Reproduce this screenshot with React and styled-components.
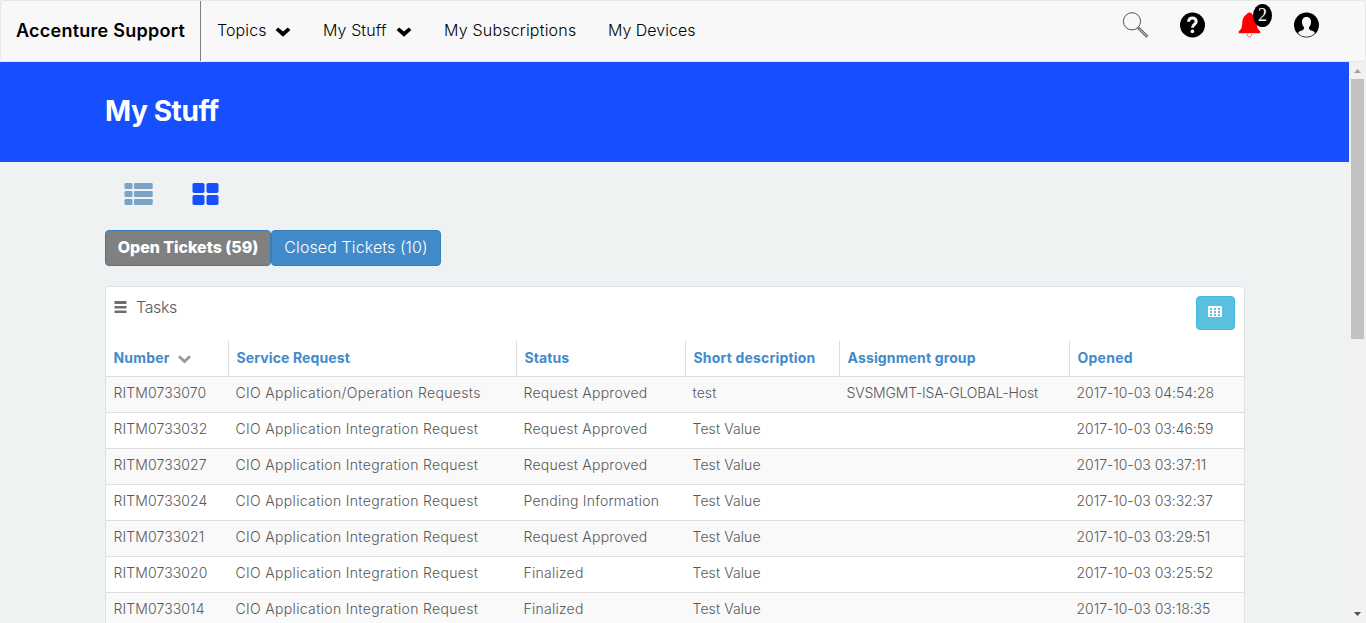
import React from "react";
import styled, { createGlobalStyle } from "styled-components";

const GlobalStyle = createGlobalStyle`
  * { box-sizing: border-box; }
  body { margin: 0; overflow: hidden; background: #eef2f3; font-family: Inter, "Liberation Sans", sans-serif; }
`;

const Page = styled.div`
  height: 623px;
  display: flex;
  flex-direction: column;
  overflow: hidden;
`;

const Navbar = styled.header`
  height: 62px;
  flex: none;
  display: flex;
  align-items: stretch;
  border: 1px solid #e7e7e7;
  border-radius: 4px;
  background: #f8f8f8;
`;

const Brand = styled.div`
  width: 200px;
  padding: 19px 0 0 15px;
  border-right: 1px solid #808080;
  font-size: 18px;
  line-height: 22px;
  font-weight: 600;
  letter-spacing: 0.25px;
  color: #000;
  white-space: nowrap;
`;

const NavItem = styled.a`
  display: flex;
  width: ${(p) => p.$w}px;
  padding: 19px 0 0 16px;
  font-size: 16px;
  line-height: 21px;
  font-weight: 300;
  letter-spacing: ${(p) => p.$ls || 0}px;
  color: #000;
  white-space: nowrap;
`;

const NavCaret = styled.svg`
  width: 16px;
  height: 10px;
  margin: 7px 16px 0 auto;
`;

const NavIcons = styled.div`
  display: flex;
  margin: 10px 45px 0 auto;
  gap: 30px;
`;

const IconSlot = styled.div`
  position: relative;
  width: 27px;
  height: 28px;
  svg { display: block; }
`;

const Badge = styled.span`
  position: absolute;
  left: 17px;
  top: -7px;
  width: 19px;
  height: 23px;
  border-radius: 50%;
  background: #000;
  color: #fff;
  font: 18px/22px "Liberation Serif", serif;
  text-align: center;
`;

const Body = styled.div`
  flex: 1;
  min-height: 0;
  display: flex;
`;

const Content = styled.main`
  flex: 1;
  min-width: 0;
  overflow: hidden;
`;

const Banner = styled.section`
  height: 100px;
  padding: 32px 0 0 105px;
  background: #174fff;
`;

const Title = styled.h1`
  margin: 0;
  font-size: 28px;
  line-height: 34px;
  font-weight: 700;
  letter-spacing: -0.4px;
  color: #fff;
`;

const Container = styled.div`
  width: 1140px;
  margin-left: 105px;
`;

const ViewSwitch = styled.div`
  display: flex;
  gap: 39px;
  height: 68px;
  padding: 21px 0 0 19px;
`;

const Tabs = styled.div`
  display: flex;
  height: 36px;
`;

const Tab = styled.button`
  width: ${(p) => p.$w}px;
  height: 36px;
  padding: 0 0 2px;
  border: 1px solid #357ebd;
  border-radius: 4px;
  background: ${(p) => (p.$active ? "#808080" : "#428bca")};
  color: #fff;
  font: ${(p) => (p.$active ? 800 : 350)} 16px/22px Inter, sans-serif;
  letter-spacing: ${(p) => p.$ls || 0}px;
  white-space: nowrap;
`;

const Card = styled.section`
  margin-top: 20px;
  border: 1px solid #dde4e6;
  border-radius: 4px;
  background: #fff;
`;

const CardHead = styled.div`
  display: flex;
  height: 54px;
  padding: 9px 9px 0 8px;
`;

const CardTitle = styled.h2`
  margin: 0 auto 0 9px;
  font-size: 16px;
  line-height: 23px;
  font-weight: 300;
  letter-spacing: -0.35px;
  color: #585858;
`;

const MenuIcon = styled.svg`
  margin-top: 5px;
`;

const GridButton = styled.button`
  display: flex;
  justify-content: center;
  width: 39px;
  height: 34px;
  padding: 9px 1px 0 0;
  border: 1px solid #46b8da;
  border-radius: 4px;
  background: #5bc0de;
`;

const Row = styled.div`
  display: grid;
  grid-template-columns: 122px 288px 169px 154px 230px 1fr;
  height: 36px;
  border-bottom: 1px solid #ddd;
  background: ${(p) => (p.$striped ? "#f9f9f9" : "#fff")};
`;

const HeadCell = styled.div`
  display: flex;
  padding-left: 7.5px;
  border-left: 1px solid #ddd;
  font-size: 14px;
  line-height: 34px;
  font-weight: 700;
  letter-spacing: ${(p) => p.$ls || 0}px;
  color: #428bca;
  white-space: nowrap;
  &:first-child { border-left: 0; }
`;

const SortIcon = styled.svg`
  margin: 14px 0 0 8.5px;
`;

const Cell = styled.div`
  padding-left: 7.5px;
  font-size: 14px;
  line-height: 32px;
  font-weight: 300;
  letter-spacing: ${(p) => p.$ls || 0}px;
  color: #585858;
  white-space: nowrap;
`;

const Scrollbar = styled.aside`
  width: 17px;
  display: flex;
  flex-direction: column;
  align-items: center;
  background: #f1f1f1;
`;

const Thumb = styled.div`
  width: 13px;
  height: 260px;
  margin-bottom: auto;
  background: #c1c1c1;
`;

const Caret = () => (
  <NavCaret viewBox="0 0 16 10">
    <path d="M0.6 2.9 L3.2 0.4 L8 4.4 L12.8 0.4 L15.4 2.9 L8 9.8Z" fill="#000" />
  </NavCaret>
);

const columns = [
  ["Number", 0.2],
  ["Service Request", 0.11],
  ["Status", 0.1],
  ["Short description", 0.19],
  ["Assignment group", 0.14],
  ["Opened", 0.25],
];

const cellSpacing = [0.1, 0.34, 0.24, 0.08, -0.17, -0.03];

const integration = "CIO Application Integration Request";
const rows = [
  ["RITM0733070", "CIO Application/Operation Requests", "Request Approved", "test", "SVSMGMT-ISA-GLOBAL-Host", "2017-10-03 04:54:28"],
  ["RITM0733032", integration, "Request Approved", "Test Value", "", "2017-10-03 03:46:59"],
  ["RITM0733027", integration, "Request Approved", "Test Value", "", "2017-10-03 03:37:11"],
  ["RITM0733024", integration, "Pending Information", "Test Value", "", "2017-10-03 03:32:37"],
  ["RITM0733021", integration, "Request Approved", "Test Value", "", "2017-10-03 03:29:51"],
  ["RITM0733020", integration, "Finalized", "Test Value", "", "2017-10-03 03:25:52"],
  ["RITM0733014", integration, "Finalized", "Test Value", "", "2017-10-03 03:18:35"],
];

export default function App() {
  return (
    <Page>
      <GlobalStyle />
      <Navbar>
        <Brand>Accenture Support</Brand>
        <NavItem $w={106} $ls={0.1}>Topics<Caret /></NavItem>
        <NavItem $w={121} $ls={0.1}>My Stuff<Caret /></NavItem>
        <NavItem $w={164} $ls={0.2}>My Subscriptions</NavItem>
        <NavItem $w={120} $ls={0}>My Devices</NavItem>
        <NavIcons>
          <IconSlot>
            <svg width="27" height="28" viewBox="0 0 27 28">
              <circle cx="10" cy="10.3" r="8.6" fill="none" stroke="#555" strokeWidth="1" />
              <path d="M16.2 16.8 L25.3 25.8" stroke="#5c5c5c" strokeWidth="3" />
              <path d="M16.8 17.4 L24.8 25.3" stroke="#a5b8c4" strokeWidth="1.2" />
            </svg>
          </IconSlot>
          <IconSlot>
            <svg width="27" height="28" viewBox="0 0 27 28">
              <circle cx="13.5" cy="14" r="12.5" fill="#000" />
              <path d="M9.6 10.8 C9.8 5.8 17.4 6 17.2 10.6 C17 13.5 13.5 13.2 13.4 16.8" fill="none" stroke="#f8f8f8" strokeWidth="3" />
              <circle cx="13.4" cy="20.4" r="1.8" fill="#f8f8f8" />
            </svg>
          </IconSlot>
          <IconSlot>
            <svg width="27" height="28" viewBox="0 0 27 28">
              <path d="M13.500 1.500 C15.200 1.500 16 2.500 16.300 3.600 C19.500 5 20.600 8.500 20.800 13 C21 17 22 18.500 24.200 20.300 V22.300 H2.800 V20.300 C5 18.500 6 17 6.200 13 C6.400 8.500 7.500 5 10.700 3.600 C11 2.500 11.800 1.500 13.500 1.500Z" fill="#f00" />
              <path d="M11.300 23 C11.500 27 15.500 27 15.700 23" fill="none" stroke="#f66" strokeWidth="1" />
            </svg>
            <Badge>2</Badge>
          </IconSlot>
          <IconSlot>
            <svg width="27" height="28" viewBox="0 0 27 28">
              <circle cx="13.5" cy="14" r="12.5" fill="#000" />
              <path d="M13.5 6 C17 6 18.3 8.5 18 11.5 C17.8 14 16.8 15.2 16 16.3 C15.8 18.5 16.5 19 19 19.8 C20.5 20.3 21.5 20.8 22 22 C19.5 24.8 16.5 25.7 13.5 25.7 C10.5 25.7 7.5 24.8 5 22 C5.5 20.8 6.5 20.3 8 19.8 C10.5 19 11.2 18.5 11 16.3 C10.2 15.2 9.2 14 9 11.5 C8.7 8.5 10 6 13.5 6Z" fill="#f8f8f8" />
            </svg>
          </IconSlot>
        </NavIcons>
      </Navbar>
      <Body>
        <Content>
          <Banner><Title>My Stuff</Title></Banner>
          <Container>
            <ViewSwitch>
              <svg width="29" height="23" viewBox="0 0 29 23" fill="#7ba3c8">
                {[0, 8, 16].map((y) => (
                  <React.Fragment key={y}>
                    <rect x="0.5" y={y} width="8" height="6" rx="1.2" />
                    <rect x="10" y={y} width="18.7" height="6" rx="1.2" />
                  </React.Fragment>
                ))}
              </svg>
              <svg width="27" height="23" viewBox="0 0 27 23" fill="#174fff">
                {[0, 12].map((y) => (
                  <React.Fragment key={y}>
                    <rect x="0.5" y={y} width="12" height="10" rx="1.8" />
                    <rect x="14.5" y={y} width="12" height="10" rx="1.8" />
                  </React.Fragment>
                ))}
              </svg>
            </ViewSwitch>
            <Tabs>
              <Tab $active $w={166} $ls={-0.05}>Open Tickets (59)</Tab>
              <Tab $w={170} $ls={0.1}>Closed Tickets (10)</Tab>
            </Tabs>
            <Card>
              <CardHead>
                <MenuIcon width="13" height="13" viewBox="0 0 13 13">
                  <path d="M0.5 0H12.5V3H0.5ZM0.5 5H12.5V7.5H0.5ZM0.5 9.500H12.5V12H0.5Z" fill="#6e6e6e" />
                </MenuIcon>
                <CardTitle>Tasks</CardTitle>
                <GridButton>
                  <svg width="14" height="11" viewBox="0 0 14 11">
                    <rect width="14" height="11" rx="1" fill="#fff" />
                    <path d="M2 2H4V4H2ZM6 2H8V4H6ZM10 2H12V4H10ZM2 5H4V7H2ZM6 5H8V7H6ZM10 5H12V7H10ZM2 8H4V10H2ZM6 8H8V10H6ZM10 8H12V10H10Z" fill="#5bc0de" />
                  </svg>
                </GridButton>
              </CardHead>
              <Row>
                {columns.map(([name, ls], i) => (
                  <HeadCell key={name} $ls={ls}>
                    {name}
                    {i === 0 && (
                      <SortIcon width="13" height="9" viewBox="0 0 13 9">
                        <path d="M1 1.3 L6.5 6.5 L12 1.3" fill="none" stroke="#999" strokeWidth="2.8" />
                      </SortIcon>
                    )}
                  </HeadCell>
                ))}
              </Row>
              {rows.map((row, r) => (
                <Row key={row[0]} $striped={r % 2 === 0}>
                  {row.map((text, i) => (
                    <Cell key={i} $ls={cellSpacing[i]}>{text}</Cell>
                  ))}
                </Row>
              ))}
            </Card>
          </Container>
        </Content>
        <Scrollbar>
          <svg width="17" height="17" viewBox="0 0 17 17"><path d="M5 11H12L8.5 7Z" fill="#a3a3a3" /></svg>
          <Thumb />
          <svg width="17" height="17" viewBox="0 0 17 17"><path d="M5 6H12L8.5 10Z" fill="#505050" /></svg>
        </Scrollbar>
      </Body>
    </Page>
  );
}
